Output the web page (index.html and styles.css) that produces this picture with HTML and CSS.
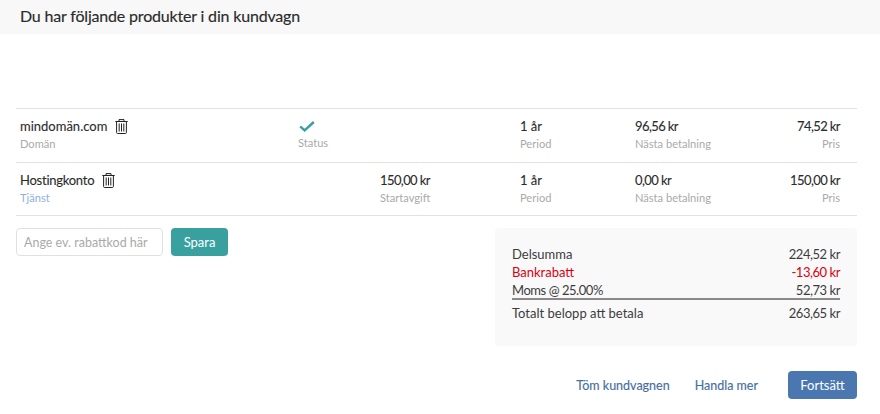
FILE: index.html
```html
<!DOCTYPE html>
<html lang="sv">
<head>
<meta charset="utf-8">
<title>Kundvagn</title>
<link rel="stylesheet" href="styles.css">
</head>
<body>
<svg class="defs" width="0" height="0" aria-hidden="true">
  <symbol id="trash" viewBox="0 0 13 15">
    <path d="M4 2.5V.6h5v1.9M.3 2.5h12.4M1.6 2.5v11c0 .6.4 1 .9 1h8c.5 0 .9-.4.9-1v-11M4.2 4.5v8M6.5 4.5v8M8.8 4.5v8" fill="none" stroke="#222" stroke-width="1"/>
  </symbol>
</svg>
<header class="title-bar"><h1>Du har följande produkter i din kundvagn</h1></header>
<main class="content">
  <section class="items">
    <div class="item">
      <div class="cell"><div class="val val-name">mindomän.com <svg class="trash"><use href="#trash"/></svg></div><div class="lbl">Domän</div></div>
      <div class="cell"><svg class="check" viewBox="0 0 16 11"><path d="M1.2 5.4l4.4 4L14.8 1" fill="none" stroke="#38a19f" stroke-width="2.4"/></svg><div class="lbl">Status</div></div>
      <div class="cell"></div>
      <div class="cell"><div class="val">1 år</div><div class="lbl">Period</div></div>
      <div class="cell"><div class="val num">96,56 kr</div><div class="lbl">Nästa betalning</div></div>
      <div class="cell cell-price"><div class="val num">74,52 kr</div><div class="lbl">Pris</div></div>
    </div>
    <div class="item">
      <div class="cell"><div class="val val-name"><span class="tight">Hostingkonto</span> <svg class="trash"><use href="#trash"/></svg></div><div class="lbl lbl-blue">Tjänst</div></div>
      <div class="cell"></div>
      <div class="cell"><div class="val num">150,00 kr</div><div class="lbl">Startavgift</div></div>
      <div class="cell"><div class="val">1 år</div><div class="lbl">Period</div></div>
      <div class="cell"><div class="val num">0,00 kr</div><div class="lbl">Nästa betalning</div></div>
      <div class="cell cell-price"><div class="val num">150,00 kr</div><div class="lbl">Pris</div></div>
    </div>
  </section>
  <section class="lower">
    <form class="coupon">
      <input class="coupon-input" type="text" placeholder="Ange ev. rabattkod här">
      <button class="btn btn-teal" type="button">Spara</button>
    </form>
    <div class="summary">
      <div class="sum-row"><span>Delsumma</span><span class="num">224,52 kr</span></div>
      <div class="sum-row sum-red"><span>Bankrabatt</span><span class="num">-13,60 kr</span></div>
      <div class="sum-row sum-tax"><span class="num">Moms @ 25.00%</span><span class="num">52,73 kr</span></div>
      <div class="sum-row sum-total"><span>Totalt belopp att betala</span><span class="num">263,65 kr</span></div>
    </div>
  </section>
  <nav class="actions">
    <a class="link" href="#">Töm kundvagnen</a>
    <a class="link" href="#">Handla mer</a>
    <button class="btn btn-blue" type="button">Fortsätt</button>
  </nav>
</main>
</body>
</html>
```
FILE: styles.css
```css
* { box-sizing: border-box; }
html, body { margin: 0; padding: 0; }
body { width: 880px; height: 414px; overflow: hidden; background: #fff; font-family: "Lato", "Noto Sans", sans-serif; color: #333; font-size: 13px; }
.defs { position: absolute; }
.title-bar { height: 34px; background: #f8f8f8; padding: 6px 20px 0; }
.title-bar h1 { margin: 0; font-size: 16px; line-height: 20px; font-weight: 400; color: #2b2b2b; letter-spacing: -.18px; -webkit-text-stroke: .15px #2b2b2b; }
.content { padding: 74px 23px 0 16px; }
.items { border-top: 1px solid #e2e2e2; }
.item { display: grid; grid-template-columns: 278px 82px 140px 115px 120px 1fr; height: 53.5px; border-bottom: 1px solid #e2e2e2; padding: 9px 17px 0 4px; }
.cell-price { text-align: right; }
.val { font-size: 13px; line-height: 17px; color: #2b2b2b; height: 17px; -webkit-text-stroke: .1px #2b2b2b; }
.val-name { display: flex; align-items: center; gap: 8px; }
.tight { letter-spacing: -.25px; }
.num { letter-spacing: -.6px; }
.sum-row .num { letter-spacing: -.45px; }
.lbl { font-size: 11.1px; line-height: 16px; margin-top: 1px; color: #aaa; }
.lbl-blue { color: #8fb0dd; }
.trash { width: 13px; height: 15px; flex: none; }
.check { display: block; width: 16px; height: 11px; margin: 3px 0 3px 1px; }
.lower { display: flex; justify-content: space-between; align-items: flex-start; margin-top: 12px; }
.coupon { display: flex; gap: 8px; }
.coupon-input { width: 147px; height: 28px; border: 1px solid #e0e0e0; border-radius: 4px; padding: 0 7px; font: 12.5px "Lato", sans-serif; background: #fff; }
.coupon-input::placeholder { color: #aaa; opacity: 1; }
.btn { border: 0; border-radius: 4px; color: #fff; font: 13px "Lato", sans-serif; height: 28px; padding: 0; }
.btn-teal { width: 57px; background: #38a19f; }
.btn-blue { width: 69px; background: #4a77b0; margin-left: 4px; }
.summary { width: 362px; height: 118px; background: #f9f9f9; border-radius: 4px; padding: 17px 17px 0 17px; }
.sum-row { display: flex; justify-content: space-between; font-size: 13px; line-height: 18px; color: #3c3c3c; }
.sum-red { color: #d9000f; }
.sum-tax { border-bottom: 2px solid #8a8a8a; height: 19px; }
.sum-total { margin-top: 4px; }
.actions { display: flex; justify-content: flex-end; align-items: center; gap: 25px; margin-top: 25px; }
.link { color: #456f9f; text-decoration: none; font-size: 12.5px; -webkit-text-stroke: .15px #456f9f; }
.link + .btn-blue { margin-left: 5px; }
```
